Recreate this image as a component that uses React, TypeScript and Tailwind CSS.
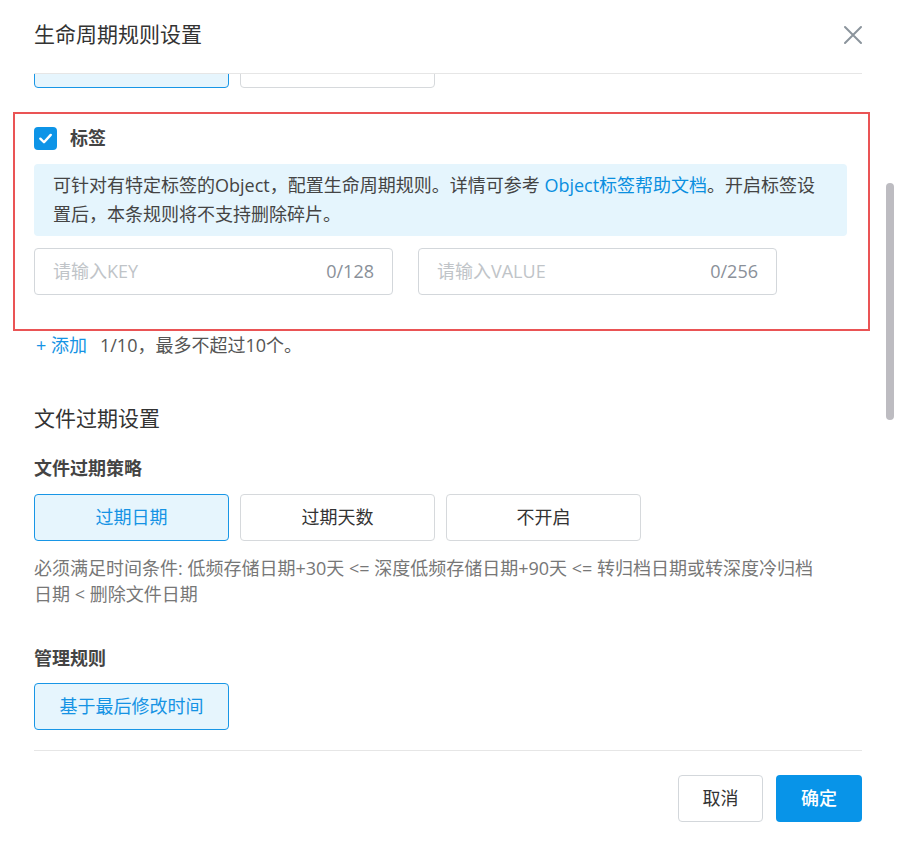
import React from "react";

const font = { fontFamily: '"Open Sans", "Noto Sans CJK SC", sans-serif' };

function OptionButton({ label, active }: { label: string; active?: boolean }) {
	return (
		<div
			className={`w-[195px] h-[47px] flex items-center justify-center rounded-[4px] border text-[18px] ${
				active
					? "bg-[#e6f5fd] border-[#1896e6] text-[#1593e4]"
					: "bg-white border-[#d6d9dc] text-[#333]"
			}`}
		>
			{label}
		</div>
	);
}

function TagInput({ placeholder, count }: { placeholder: string; count: string }) {
	return (
		<div className="w-[359px] h-[47px] flex items-center justify-between rounded-[4px] border border-[#d3d7db] pl-[18px] pr-[18px] text-[18px]">
			<span className="text-[#c0c4c8]">{placeholder}</span>
			<span className="text-[#8a9099]">{count}</span>
		</div>
	);
}

export default function App() {
	return (
		<div className="w-[898px] h-[847px] bg-white flex flex-col relative overflow-hidden" style={font}>
			{/* header */}
			<div className="mx-[34px] mr-[36px] h-[74px] flex items-center justify-between border-b border-[#e6e6e6]">
				<h2 className="text-[21px] text-[#333] leading-[30px] -mt-[5px]">生命周期规则设置</h2>
				<svg width="22" height="22" viewBox="0 0 22 22" className="-mt-[3px] -mr-[2px]">
					<path d="M3 3 L19 19 M19 3 L3 19" stroke="#8b949c" strokeWidth="2" strokeLinecap="round" />
				</svg>
			</div>

			{/* body */}
			<div className="h-[676px] overflow-hidden relative">
				<div className="pl-[34px] pr-[36px]">
					<div className="flex gap-[11px] -mt-[33px]">
						<OptionButton label="" active />
						<OptionButton label="" />
					</div>

					<div className="mt-[24px] -ml-[21px] -mr-[8px] border-2 border-[#ea5455] pl-[19px] pt-[13px] pb-[34px]">
						<div className="flex items-center gap-[13px] h-[23px]">
							<div className="w-[23px] h-[23px] rounded-[4px] bg-[#0d94e7] flex items-center justify-center">
								<svg width="15" height="15" viewBox="0 0 16 16">
									<path d="M2.5 8.2 L6.4 12 L13.6 4.2" fill="none" stroke="white" strokeWidth="2.6" strokeLinecap="round" strokeLinejoin="round" />
								</svg>
							</div>
							<span className="text-[18px] font-bold text-[#444]">标签</span>
						</div>
						<div className="mt-[14px] w-[813px] bg-[#e5f5fd] rounded-[4px] px-[19px] py-[7px] text-[18px] leading-[29px] text-[#444]">
							可针对有特定标签的Object，配置生命周期规则。详情可参考{" "}
							<span className="text-[#0a8fe0]">Object标签帮助文档</span>。开启标签设置后，本条规则将不支持删除碎片。
						</div>
						<div className="mt-[12px] flex gap-[25px]">
							<TagInput placeholder="请输入KEY" count="0/128" />
							<TagInput placeholder="请输入VALUE" count="0/256" />
						</div>
					</div>

					<div className="mt-[1px] h-[26px] flex items-center text-[18px] pl-[2px]">
						<span className="text-[#1593e4]">+ 添加</span>
						<span className="ml-[13px] text-[#555]">1/10，最多不超过10个。</span>
					</div>

					<h3 className="mt-[45px] text-[21px] leading-[30px] text-[#333]">文件过期设置</h3>
					<div className="mt-[22px] text-[18px] leading-[26px] font-bold text-[#444]">文件过期策略</div>
					<div className="mt-[13px] flex gap-[11px]">
						<OptionButton label="过期日期" active />
						<OptionButton label="过期天数" />
						<OptionButton label="不开启" />
					</div>
					<p className="mt-[14px] text-[18px] leading-[26px] text-[#777] pr-[44px]">
						必须满足时间条件: 低频存储日期+30天 &lt;= 深度低频存储日期+90天 &lt;= 转归档日期或转深度冷归档日期 &lt; 删除文件日期
					</p>

					<div className="mt-[38px] text-[18px] leading-[26px] font-bold text-[#444]">管理规则</div>
					<div className="mt-[12px]">
						<OptionButton label="基于最后修改时间" active />
					</div>
				</div>

				{/* scrollbar thumb */}
				<div className="absolute right-[4px] top-[109px] w-[8px] h-[237px] rounded-full bg-[#bdbcc1]" />
			</div>

			{/* footer */}
			<div className="ml-[34px] mr-[36px] border-t border-[#e6e6e6] pt-[24px] flex justify-end gap-[13px]">
				<button className="w-[85px] h-[47px] rounded-[4px] border border-[#d3d7db] bg-white text-[18px] text-[#333]">
					取消
				</button>
				<button className="w-[86px] h-[47px] rounded-[4px] bg-[#0894e8] text-[18px] text-white font-medium">
					确定
				</button>
			</div>
		</div>
	);
}
